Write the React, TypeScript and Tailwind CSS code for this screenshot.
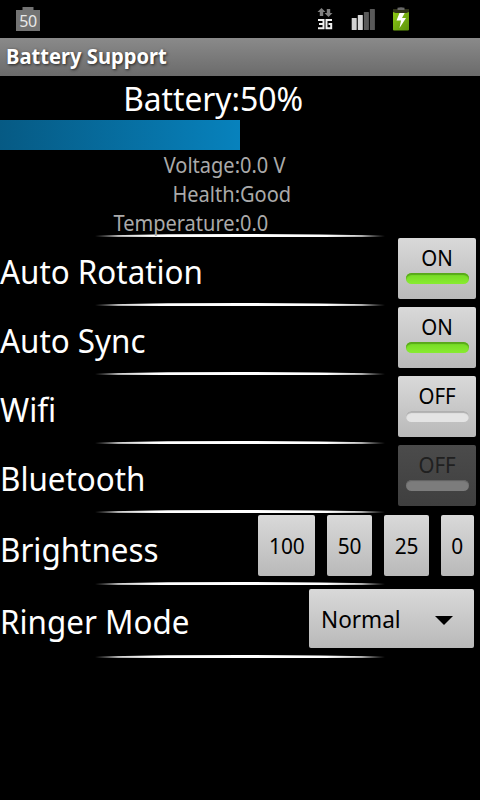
import type { ReactNode } from 'react';

const Divider = () => (
    <svg className="block mx-auto w-[290px] h-[3px] overflow-visible" viewBox="0 0 290 3">
        <defs>
            <linearGradient id="line" x1="0" x2="1" y1="0" y2="0">
                <stop offset="0" stopColor="#fff" stopOpacity="0" />
                <stop offset="0.08" stopColor="#fff" stopOpacity="0.8" />
                <stop offset="0.2" stopColor="#fff" />
                <stop offset="0.8" stopColor="#fff" />
                <stop offset="0.92" stopColor="#fff" stopOpacity="0.8" />
                <stop offset="1" stopColor="#fff" stopOpacity="0" />
            </linearGradient>
        </defs>
        <path d="M0 1.500 Q145 -1.300 290 1.500 V2.700 Q145 3.400 0 2.700 Z" fill="url(#line)" />
    </svg>
);

const StatusBar = () => (
    <div className="relative h-[38px] bg-black">
        {/* Battery level notification */}
        <div className="absolute left-4 top-[7px] w-6 h-6">
            <svg className="absolute inset-0" width="24" height="24" viewBox="0 0 24 24">
                <path d="M0 3h6.500V0h11v3H24v21H0z" fill="#737373" />
            </svg>
            <span className="absolute inset-x-0 top-[4px] text-center text-[16px] leading-[20px] text-[#e8e8e8] tracking-[-0.4px]">50</span>
        </div>

        {/* 3G data */}
        <svg className="absolute left-[316px] top-[7px]" width="18" height="24" viewBox="0 0 18 24">
            <path d="M5.500 1 L9.500 5 H7.200 V9 H3.800 V5 H1.500 Z" fill="#808080" />
            <path d="M12.500 10 L8.500 6 H10.800 V2 H14.200 V6 H16.500 Z" fill="#808080" />
            <path d="M2 13H7.500V21.200H2M3 17H7.500M16 13H10.500V21.200H15.200V17H12.500" fill="none" stroke="#f0f0f0" strokeWidth="2" />
        </svg>

        {/* Signal strength */}
        <svg className="absolute left-[351px] top-[8px]" width="24" height="23" viewBox="0 0 24 23">
            <rect x="0.700" y="10" width="5" height="12" rx="0.500" fill="#d2d2d2" />
            <rect x="6.800" y="7" width="5" height="15" rx="0.500" fill="#d8d8d8" />
            <rect x="12.900" y="4" width="5" height="18" rx="0.500" fill="#595959" />
            <rect x="18.900" y="1" width="5" height="21" rx="0.500" fill="#595959" />
        </svg>

        {/* Charging battery */}
        <svg className="absolute left-[392px] top-[6px]" width="18" height="26" viewBox="0 0 18 26">
            <defs>
                <linearGradient id="cell" x1="0" x2="1" y1="0" y2="1">
                    <stop offset="0" stopColor="#8cc814" />
                    <stop offset="0.5" stopColor="#74ad10" />
                    <stop offset="1" stopColor="#5c9209" />
                </linearGradient>
            </defs>
            <path d="M1 3h16v4H1z" fill="#303319" />
            <path d="M5.500 4V1.800Q9 0.500 12.500 1.800V4z" fill="#686868" />
            <path d="M1 6l2.500 1h11L17 6v17.500q0 1-1 1H2q-1 0-1-1z" fill="url(#cell)" />
            <path d="M7.500 7h5.200l-2.700 5h4l-6.500 10 1.500-7.500H4.500z" fill="#fff" />
        </svg>
    </div>
);

const stats = [
    { name: 'Voltage', value: '0.0 V' },
    { name: 'Health', value: 'Good' },
    { name: 'Temperature', value: '0.0' },
];

const Toggle = ({ on = false, disabled = false }: { on?: boolean; disabled?: boolean }) => (
    <button
        disabled={disabled}
        className={`mt-px mr-1 w-[78px] h-[61px] rounded-[2px] flex flex-col items-center bg-linear-to-b ${
            disabled ? 'from-[#4b4b4b] to-[#3f3f3f] text-[#202020]' : 'from-[#d9d9d9] to-[#b9b9b9] text-black'
        }`}
    >
        <span className="h-[35px] pt-[5px] text-[22px] leading-[29px]">
            <span className="inline-block scale-x-[0.93]">{on ? 'ON' : 'OFF'}</span>
        </span>
        <span
            className={`w-[63px] h-[11px] rounded-full ${
                on
                    ? 'bg-linear-to-b from-[#74d824] to-[#88ec30] shadow-[inset_0_2px_1px_#58a81a]'
                    : disabled
                      ? 'bg-[#7c7c7c] shadow-[inset_0_1px_1px_#606060]'
                      : 'bg-[#e4e4e4] shadow-[inset_0_2px_1px_#b0b0b0]'
            }`}
        />
    </button>
);

const Row = ({ label, height = 'h-[66px]', pad = 'pt-[13px]', children }: { label: string; height?: string; pad?: string; children: ReactNode }) => (
    <>
        <div className={`flex justify-between items-start ${height}`}>
            <span className={`text-[33px] leading-[44px] whitespace-nowrap origin-left scale-x-95 ${pad}`}>{label}</span>
            {children}
        </div>
        <Divider />
    </>
);

const levels = [
    { value: '100', width: 'w-[57px]' },
    { value: '50', width: 'w-[45px]' },
    { value: '25', width: 'w-[45px]' },
    { value: '0', width: 'w-[33px]' },
];

const App = () => {
    return (
        <div className="w-[480px] h-[800px] overflow-hidden bg-black text-white font-['Noto_Sans',sans-serif]">
            <StatusBar />

            <header className="h-[38px] pl-[6px] bg-linear-to-b from-[#8a8a8a] to-[#6b6b6b]">
                <h1 className="text-[21px] leading-[37px] font-bold origin-left scale-x-[0.96] [text-shadow:1px_1px_3px_#222]">Battery Support</h1>
            </header>

            {/* Battery level */}
            <div className="grid grid-cols-2 h-[44px] text-[33px] leading-[46px]">
                <span className="text-right origin-right scale-x-[0.96]">Battery:</span>
                <span className="origin-left scale-x-[0.97]">50%</span>
            </div>
            <div className="h-[30px]">
                <div className="h-full bg-linear-to-r from-[#065a84] to-[#0782bd]" style={{ width: '50%' }} />
            </div>
            <div className="h-[84px] text-[22px] leading-[29px] text-[#aaa]">
                {stats.map((stat) => (
                    <div key={stat.name} className="grid grid-cols-2 h-[29px]">
                        <span className="text-right origin-right scale-x-[0.91]">{stat.name}:</span>
                        <span className="origin-left scale-x-[0.91]">{stat.value}</span>
                    </div>
                ))}
            </div>
            <Divider />

            <Row label="Auto Rotation"><Toggle on /></Row>
            <Row label="Auto Sync"><Toggle on /></Row>
            <Row label="Wifi"><Toggle /></Row>
            <Row label="Bluetooth"><Toggle disabled /></Row>
            <Row label="Brightness" height="h-[69px]" pad="pt-[15px]">
                <div className="flex gap-3 mt-[2px] mr-[6px]">
                    {levels.map((level) => (
                        <button key={level.value} className={`${level.width} h-[61px] rounded-[2px] bg-linear-to-b from-[#d9d9d9] to-[#b9b9b9] text-black text-[22px]`}>
                            <span className="inline-block scale-x-95">{level.value}</span>
                        </button>
                    ))}
                </div>
            </Row>
            <Row label="Ringer Mode" height="h-[70px]" pad="pt-[15px]">
                <button className="flex items-center justify-between w-[165px] h-[59px] mt-1 mr-[6px] pl-3 pr-[21px] rounded-[2px] bg-linear-to-b from-[#d9d9d9] to-[#b9b9b9] text-black text-[24px]">
                    <span className="origin-left scale-x-[0.94]">Normal</span>
                    <svg className="mt-1" width="18" height="9" viewBox="0 0 18 9">
                        <path d="M0 0h18L9 9z" fill="#000" />
                    </svg>
                </button>
            </Row>
        </div>
    );
};

export default App;
